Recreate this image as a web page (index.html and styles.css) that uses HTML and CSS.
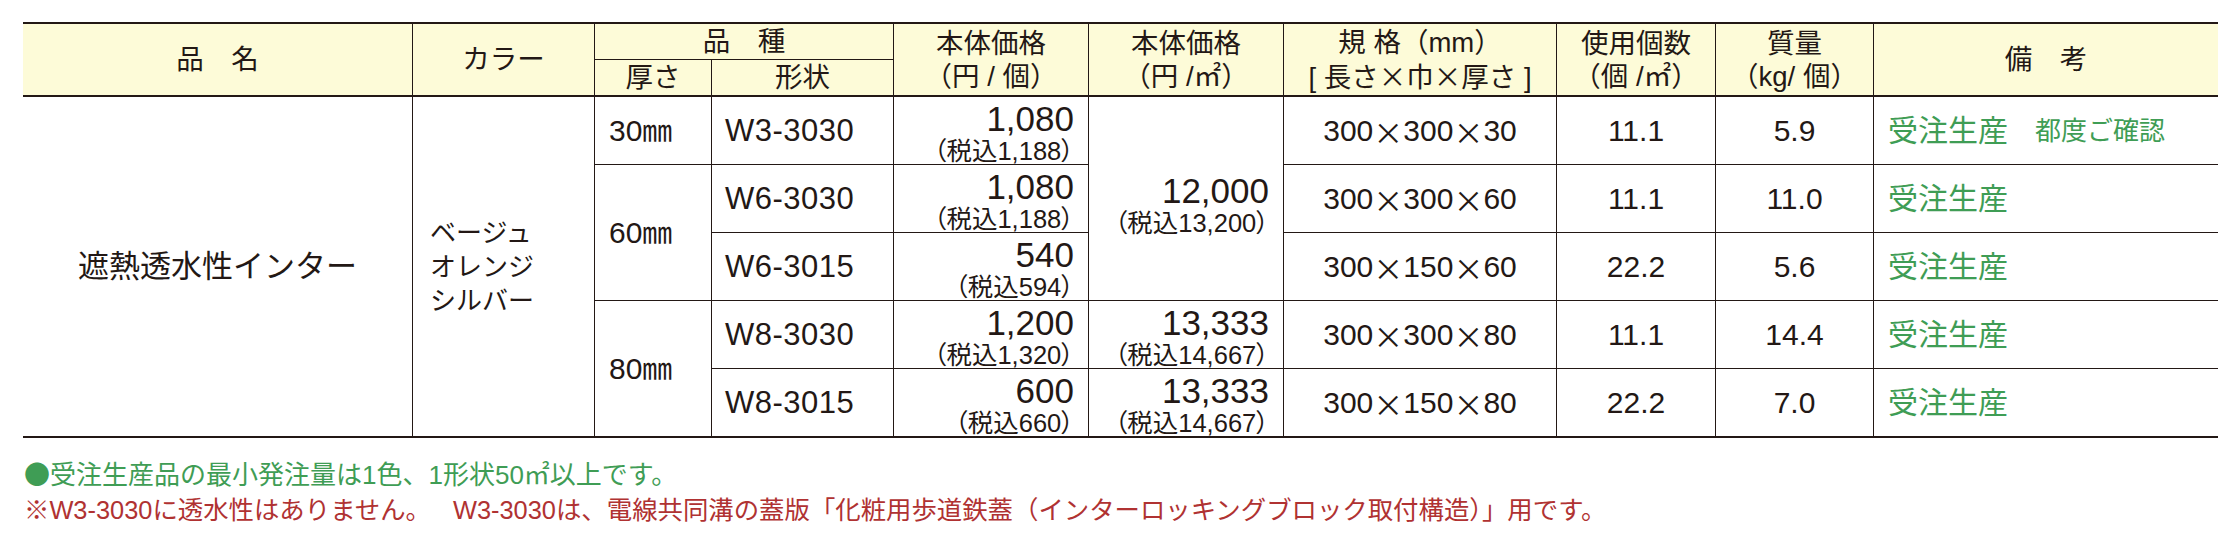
FILE: index.html
```html
<!DOCTYPE html>
<html lang="ja">
<head>
<meta charset="utf-8">
<title>遮熱透水性インター 価格表</title>
<link rel="stylesheet" href="styles.css">
</head>
<body>
<main class="page">
  <div class="spec" role="table">
    <!-- header row A -->
    <div class="cell th r2 hb">品　名</div>
    <div class="cell th r2 hb">カラー</div>
    <div class="cell th c2">品　種</div>
    <div class="cell th r2 hb"><span>本体価格</span><span>（円 / 個）</span></div>
    <div class="cell th r2 hb"><span>本体価格</span><span>（円 /㎡）</span></div>
    <div class="cell th r2 hb"><span>規 格（mm）</span><span>[ 長さ<span class="x">×</span>巾<span class="x">×</span>厚さ ]</span></div>
    <div class="cell th r2 hb"><span>使用個数</span><span>（個 /㎡）</span></div>
    <div class="cell th r2 hb"><span>質量</span><span>（kg/ 個）</span></div>
    <div class="cell th r2 hb edge">備　考</div>
    <!-- header row B -->
    <div class="cell th hb">厚さ</div>
    <div class="cell th hb">形状</div>

    <!-- body row 1 -->
    <div class="cell name r5">遮熱透水性インター</div>
    <div class="cell color r5"><div class="lines"><span>ベージュ</span><span>オレンジ</span><span>シルバー</span></div></div>
    <div class="cell thick">30㎜</div>
    <div class="cell code">W3-3030</div>
    <div class="cell price"><span class="big">1,080</span><span class="tax">（税込1,188）</span></div>
    <div class="cell price mid r3"><span class="big">12,000</span><span class="tax">（税込13,200）</span></div>
    <div class="cell dim">300<span class="x">×</span>300<span class="x">×</span>30</div>
    <div class="cell num">11.1</div>
    <div class="cell num">5.9</div>
    <div class="cell note edge">受注生産<span class="sub">都度ご確認</span></div>

    <!-- body row 2 -->
    <div class="cell thick r2">60㎜</div>
    <div class="cell code">W6-3030</div>
    <div class="cell price"><span class="big">1,080</span><span class="tax">（税込1,188）</span></div>
    <div class="cell dim">300<span class="x">×</span>300<span class="x">×</span>60</div>
    <div class="cell num">11.1</div>
    <div class="cell num">11.0</div>
    <div class="cell note edge">受注生産</div>

    <!-- body row 3 -->
    <div class="cell code">W6-3015</div>
    <div class="cell price"><span class="big">540</span><span class="tax">（税込594）</span></div>
    <div class="cell dim">300<span class="x">×</span>150<span class="x">×</span>60</div>
    <div class="cell num">22.2</div>
    <div class="cell num">5.6</div>
    <div class="cell note edge">受注生産</div>

    <!-- body row 4 -->
    <div class="cell thick r2">80㎜</div>
    <div class="cell code">W8-3030</div>
    <div class="cell price"><span class="big">1,200</span><span class="tax">（税込1,320）</span></div>
    <div class="cell price"><span class="big">13,333</span><span class="tax">（税込14,667）</span></div>
    <div class="cell dim">300<span class="x">×</span>300<span class="x">×</span>80</div>
    <div class="cell num">11.1</div>
    <div class="cell num">14.4</div>
    <div class="cell note edge">受注生産</div>

    <!-- body row 5 -->
    <div class="cell code">W8-3015</div>
    <div class="cell price"><span class="big">600</span><span class="tax">（税込660）</span></div>
    <div class="cell price"><span class="big">13,333</span><span class="tax">（税込14,667）</span></div>
    <div class="cell dim">300<span class="x">×</span>150<span class="x">×</span>80</div>
    <div class="cell num">22.2</div>
    <div class="cell num">7.0</div>
    <div class="cell note edge">受注生産</div>
  </div>

  <div class="notes">
    <p class="n1"><span class="dot">●</span>受注生産品の最小発注量は1色、1形状50㎡以上です。</p>
    <p class="n2">※W3-3030に透水性はありません。<span class="gap"></span>W3-3030は、電線共同溝の蓋版「化粧用歩道鉄蓋（インターロッキングブロック取付構造）」用です。</p>
  </div>
</main>
</body>
</html>
```

FILE: styles.css
```css
* {
  box-sizing: border-box;
}

html,
body {
  margin: 0;
  padding: 0;
  background: #ffffff;
}

body {
  font-family: "Liberation Sans", "Noto Sans CJK JP", sans-serif;
  color: #231815;
}

.page {
  width: 2218px;
  padding: 22px 0 0 23px;
}

/* ---------- table grid ---------- */
.spec {
  display: grid;
  width: 2195px;
  grid-template-columns: 390px 182px 117px 182px 195px 195px 273px 159px 158px 344px;
  grid-template-rows: 36px 37px repeat(5, 68px);
  border-top: 2px solid #231815;
  border-bottom: 1px solid #231815;
}

.cell {
  display: flex;
  align-items: center;
  justify-content: center;
  min-width: 0;
  border-right: 1px solid #231815;
  border-bottom: 1px solid #231815;
  font-size: 30px;
  line-height: 34px;
  white-space: nowrap;
}

.cell.edge {
  border-right: 0;
}

.r2 { grid-row: span 2; }
.r3 { grid-row: span 3; }
.r5 { grid-row: span 5; }
.c2 { grid-column: span 2; }

/* ---------- header ---------- */
.th {
  flex-direction: column;
  background: #fdfbd8;
  font-size: 27.5px;
  line-height: 33px;
  text-align: center;
}

.th.hb {
  border-bottom-width: 2px;
}

.x {
  display: inline-block;
  width: 1em;
  text-align: center;
  font-family: "Noto Sans CJK JP", sans-serif;
}

/* ---------- body ---------- */
.name {
  font-size: 31px;
  line-height: 36px;
}

.color {
  justify-content: flex-start;
  padding-left: 17px;
  font-size: 26px;
  line-height: 34px;
}

.lines {
  display: flex;
  flex-direction: column;
}

.thick {
  justify-content: flex-start;
  padding-left: 14px;
}

.code {
  justify-content: flex-start;
  padding-left: 13px;
  font-size: 31px;
  letter-spacing: 0.5px;
}

.price {
  flex-direction: column;
  align-items: flex-end;
  justify-content: flex-start;
  padding: 3px 14px 0 0;
}

.price.mid {
  justify-content: center;
  padding-top: 12px;
}

.big {
  font-size: 35px;
  line-height: 37px;
}

.tax {
  font-size: 25.5px;
  line-height: 28px;
  font-feature-settings: "palt";
}

.note {
  justify-content: flex-start;
  padding-left: 14px;
  color: #3f9d55;
}

.note .sub {
  margin-left: 27px;
  font-size: 26px;
}

/* ---------- footnotes ---------- */
.notes {
  margin-top: 17px;
  padding-left: 1px;
  font-size: 26px;
  line-height: 35px;
}

.notes p {
  margin: 0;
  white-space: nowrap;
}

.n1 {
  color: #3f9d55;
}

.n2 {
  color: #b03232;
  font-size: 25.4px;
}

.gap {
  display: inline-block;
  width: 22px;
}

.dot {
  font-family: "Noto Sans CJK JP", sans-serif;
}
```
